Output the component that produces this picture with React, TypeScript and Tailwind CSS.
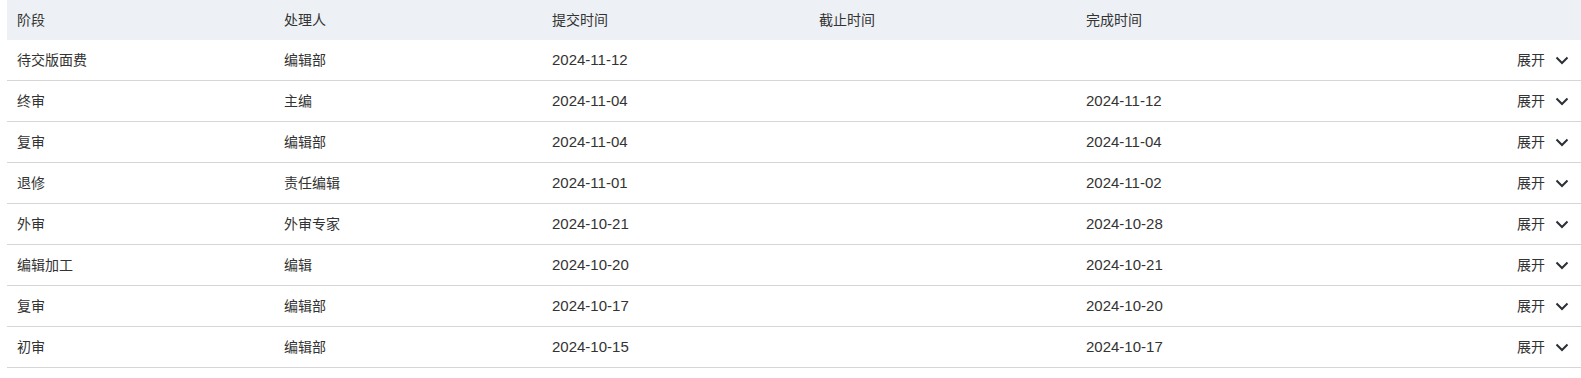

type Linha = {
  fase: string;
  responsavel: string;
  enviado: string;
  prazo: string;
  concluido: string;
};

const linhas: Linha[] = [
  { fase: "待交版面费", responsavel: "编辑部", enviado: "2024-11-12", prazo: "", concluido: "" },
  { fase: "终审", responsavel: "主编", enviado: "2024-11-04", prazo: "", concluido: "2024-11-12" },
  { fase: "复审", responsavel: "编辑部", enviado: "2024-11-04", prazo: "", concluido: "2024-11-04" },
  { fase: "退修", responsavel: "责任编辑", enviado: "2024-11-01", prazo: "", concluido: "2024-11-02" },
  { fase: "外审", responsavel: "外审专家", enviado: "2024-10-21", prazo: "", concluido: "2024-10-28" },
  { fase: "编辑加工", responsavel: "编辑", enviado: "2024-10-20", prazo: "", concluido: "2024-10-21" },
  { fase: "复审", responsavel: "编辑部", enviado: "2024-10-17", prazo: "", concluido: "2024-10-20" },
  { fase: "初审", responsavel: "编辑部", enviado: "2024-10-15", prazo: "", concluido: "2024-10-17" },
];

const grade = "grid grid-cols-[267px_268px_267px_267px_267px_1fr] items-center";

function Chevron() {
  return (
    <svg width="14" height="9" viewBox="0 0 14 9" fill="none" className="shrink-0">
      <path d="M1.5 1.5 7 7l5.5-5.5" stroke="#2b2f36" strokeWidth="2" />
    </svg>
  );
}

export default function App() {
  return (
    <div
      className="min-h-[378px] bg-white pl-[7px] text-[14px] text-[#333]"
      style={{ fontFamily: '"Liberation Sans", "Noto Sans CJK SC", sans-serif' }}
    >
      <div className={`${grade} h-10 bg-[#edf1f5]`}>
        {["阶段", "处理人", "提交时间", "截止时间", "完成时间", ""].map((t, i) => (
          <div key={i} className="pl-[10px]">
            {t}
          </div>
        ))}
      </div>

      {linhas.map((l, i) => (
        <div key={i} className={`${grade} h-[41px] border-b border-[#d6d6d6]`}>
          <div className="pl-[10px]">{l.fase}</div>
          <div className="pl-[10px]">{l.responsavel}</div>
          <div className="pl-[10px] text-[15px]">{l.enviado}</div>
          <div className="pl-[10px] text-[15px]">{l.prazo}</div>
          <div className="pl-[10px] text-[15px]">{l.concluido}</div>
          <button
            type="button"
            className="flex items-center justify-end gap-[10px] pr-[12px] text-[#333]"
          >
            展开
            <Chevron />
          </button>
        </div>
      ))}
    </div>
  );
}
